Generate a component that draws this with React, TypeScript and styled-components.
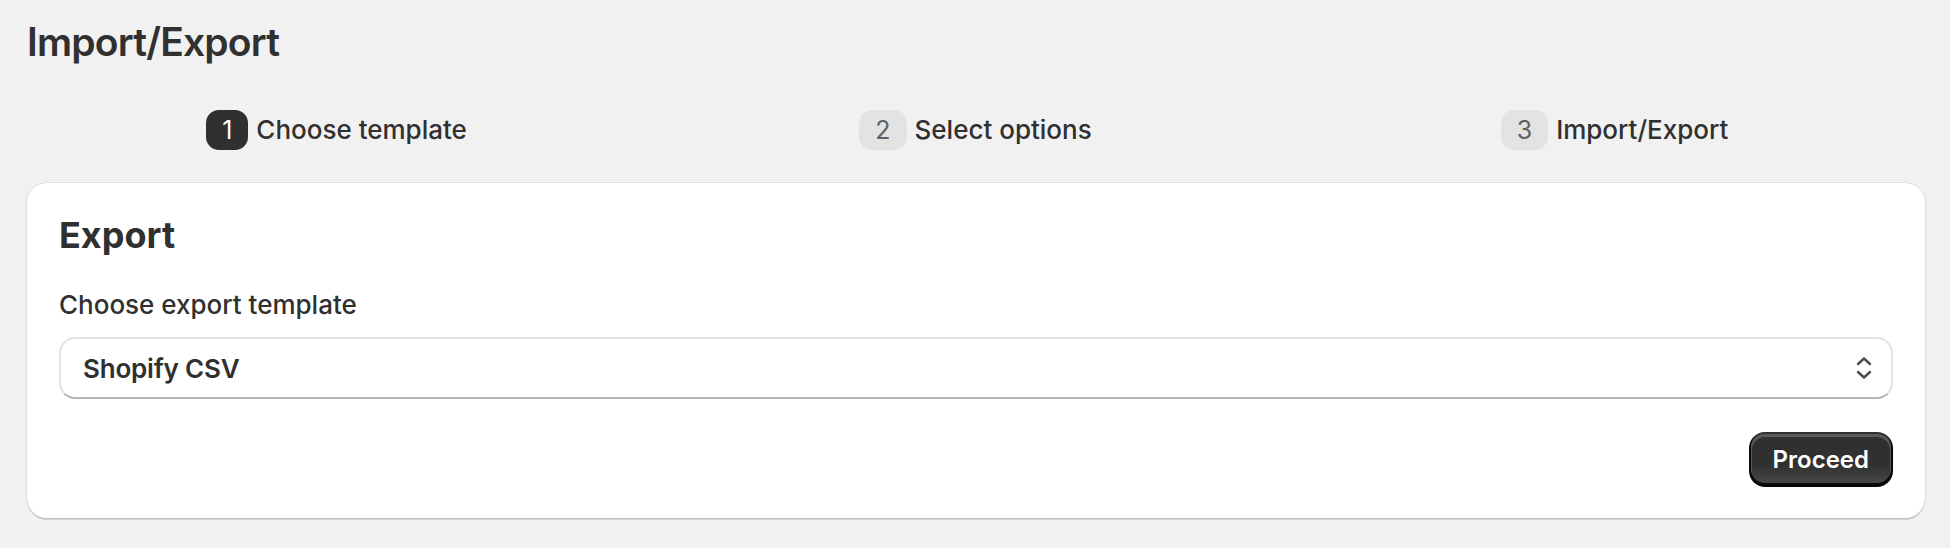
import React from "react";
import styled, { createGlobalStyle } from "styled-components";

const GlobalStyle = createGlobalStyle`
  html, body {
    margin: 0;
    padding: 0;
    background: #f1f1f1;
    font-family: Inter, "Noto Sans", sans-serif;
    color: #303030;
  }
`;

const Page = styled.div`
  padding: 18px 25px 30px 27px;
`;

const PageTitle = styled.h1`
  margin: 0;
  font-size: 39px;
  line-height: 48px;
  font-weight: 600;
  letter-spacing: -0.8px;
  color: #303030;
`;

const Steps = styled.div`
  display: grid;
  grid-template-columns: repeat(3, 1fr);
  margin: 44px -9px 33px -10px;
`;

const Step = styled.div`
  display: flex;
  align-items: center;
  justify-content: center;
  gap: 8px;
`;

const StepNumber = styled.span<{ $active?: boolean }>`
  display: inline-flex;
  align-items: center;
  justify-content: center;
  height: 40px;
  padding: 0 16px;
  border-radius: 13px;
  font-size: 25px;
  background: ${(p) => (p.$active ? "#303030" : "#e3e3e3")};
  color: ${(p) => (p.$active ? "#ffffff" : "#616161")};
`;

const StepLabel = styled.span`
  font-size: 26px;
  line-height: 32px;
  font-weight: 450;
  color: #303030;
`;

const Card = styled.div`
  background: #ffffff;
  border-radius: 20px;
  padding: 32px 32px 31px;
  box-shadow: 0 2px 0 0 rgba(0, 0, 0, 0.13), 0 0 0 1px rgba(0, 0, 0, 0.07);
`;

const CardTitle = styled.h2`
  margin: 0 0 34px;
  font-size: 36px;
  line-height: 40px;
  font-weight: 700;
  color: #303030;
`;

const FieldLabel = styled.label`
  display: block;
  font-size: 26px;
  line-height: 32px;
  font-weight: 450;
  color: #303030;
  margin-bottom: 16px;
`;

const SelectBox = styled.div`
  display: flex;
  align-items: center;
  justify-content: space-between;
  height: 62px;
  box-sizing: border-box;
  padding: 0 18px 0 22px;
  border-radius: 16px;
  border: 2px solid #e3e3e3;
  border-bottom-color: #b5b5b5;
  background: #ffffff;
`;

const SelectValue = styled.span`
  font-size: 26px;
  font-weight: 600;
  letter-spacing: -0.2px;
  color: #303030;
`;

const Actions = styled.div`
  display: flex;
  justify-content: flex-end;
  margin-top: 33px;
`;

const PrimaryButton = styled.button`
  height: 55px;
  padding: 0 24px;
  border: none;
  border-radius: 16px;
  font-family: Inter, "Noto Sans", sans-serif;
  font-size: 24px;
  font-weight: 600;
  color: #ffffff;
  background: linear-gradient(180deg, rgba(48, 48, 48, 0) 60%, rgba(255, 255, 255, 0.14) 100%), #303030;
  box-shadow: inset 0 -2px 0 2px rgba(0, 0, 0, 0.85), inset 0 0 0 2px #303030, inset 0 2px 0 3px rgba(255, 255, 255, 0.2);
  cursor: pointer;
`;

const steps = [
  { n: 1, label: "Choose template" },
  { n: 2, label: "Select options" },
  { n: 3, label: "Import/Export" },
];

const SelectIcon = () => (
  <svg width="18" height="26" viewBox="0 0 18 26" fill="none">
    <path d="M3 9 L9 3.5 L15 9" stroke="#4a4a4a" strokeWidth="2.4" strokeLinecap="round" strokeLinejoin="round" />
    <path d="M3 17 L9 22.5 L15 17" stroke="#4a4a4a" strokeWidth="2.4" strokeLinecap="round" strokeLinejoin="round" />
  </svg>
);

export default function App() {
  return (
    <Page>
      <GlobalStyle />
      <PageTitle>Import/Export</PageTitle>
      <Steps>
        {steps.map((s) => (
          <Step key={s.n}>
            <StepNumber $active={s.n === 1}>{s.n}</StepNumber>
            <StepLabel>{s.label}</StepLabel>
          </Step>
        ))}
      </Steps>
      <Card>
        <CardTitle>Export</CardTitle>
        <FieldLabel>Choose export template</FieldLabel>
        <SelectBox>
          <SelectValue>Shopify CSV</SelectValue>
          <SelectIcon />
        </SelectBox>
        <Actions>
          <PrimaryButton>Proceed</PrimaryButton>
        </Actions>
      </Card>
    </Page>
  );
}
